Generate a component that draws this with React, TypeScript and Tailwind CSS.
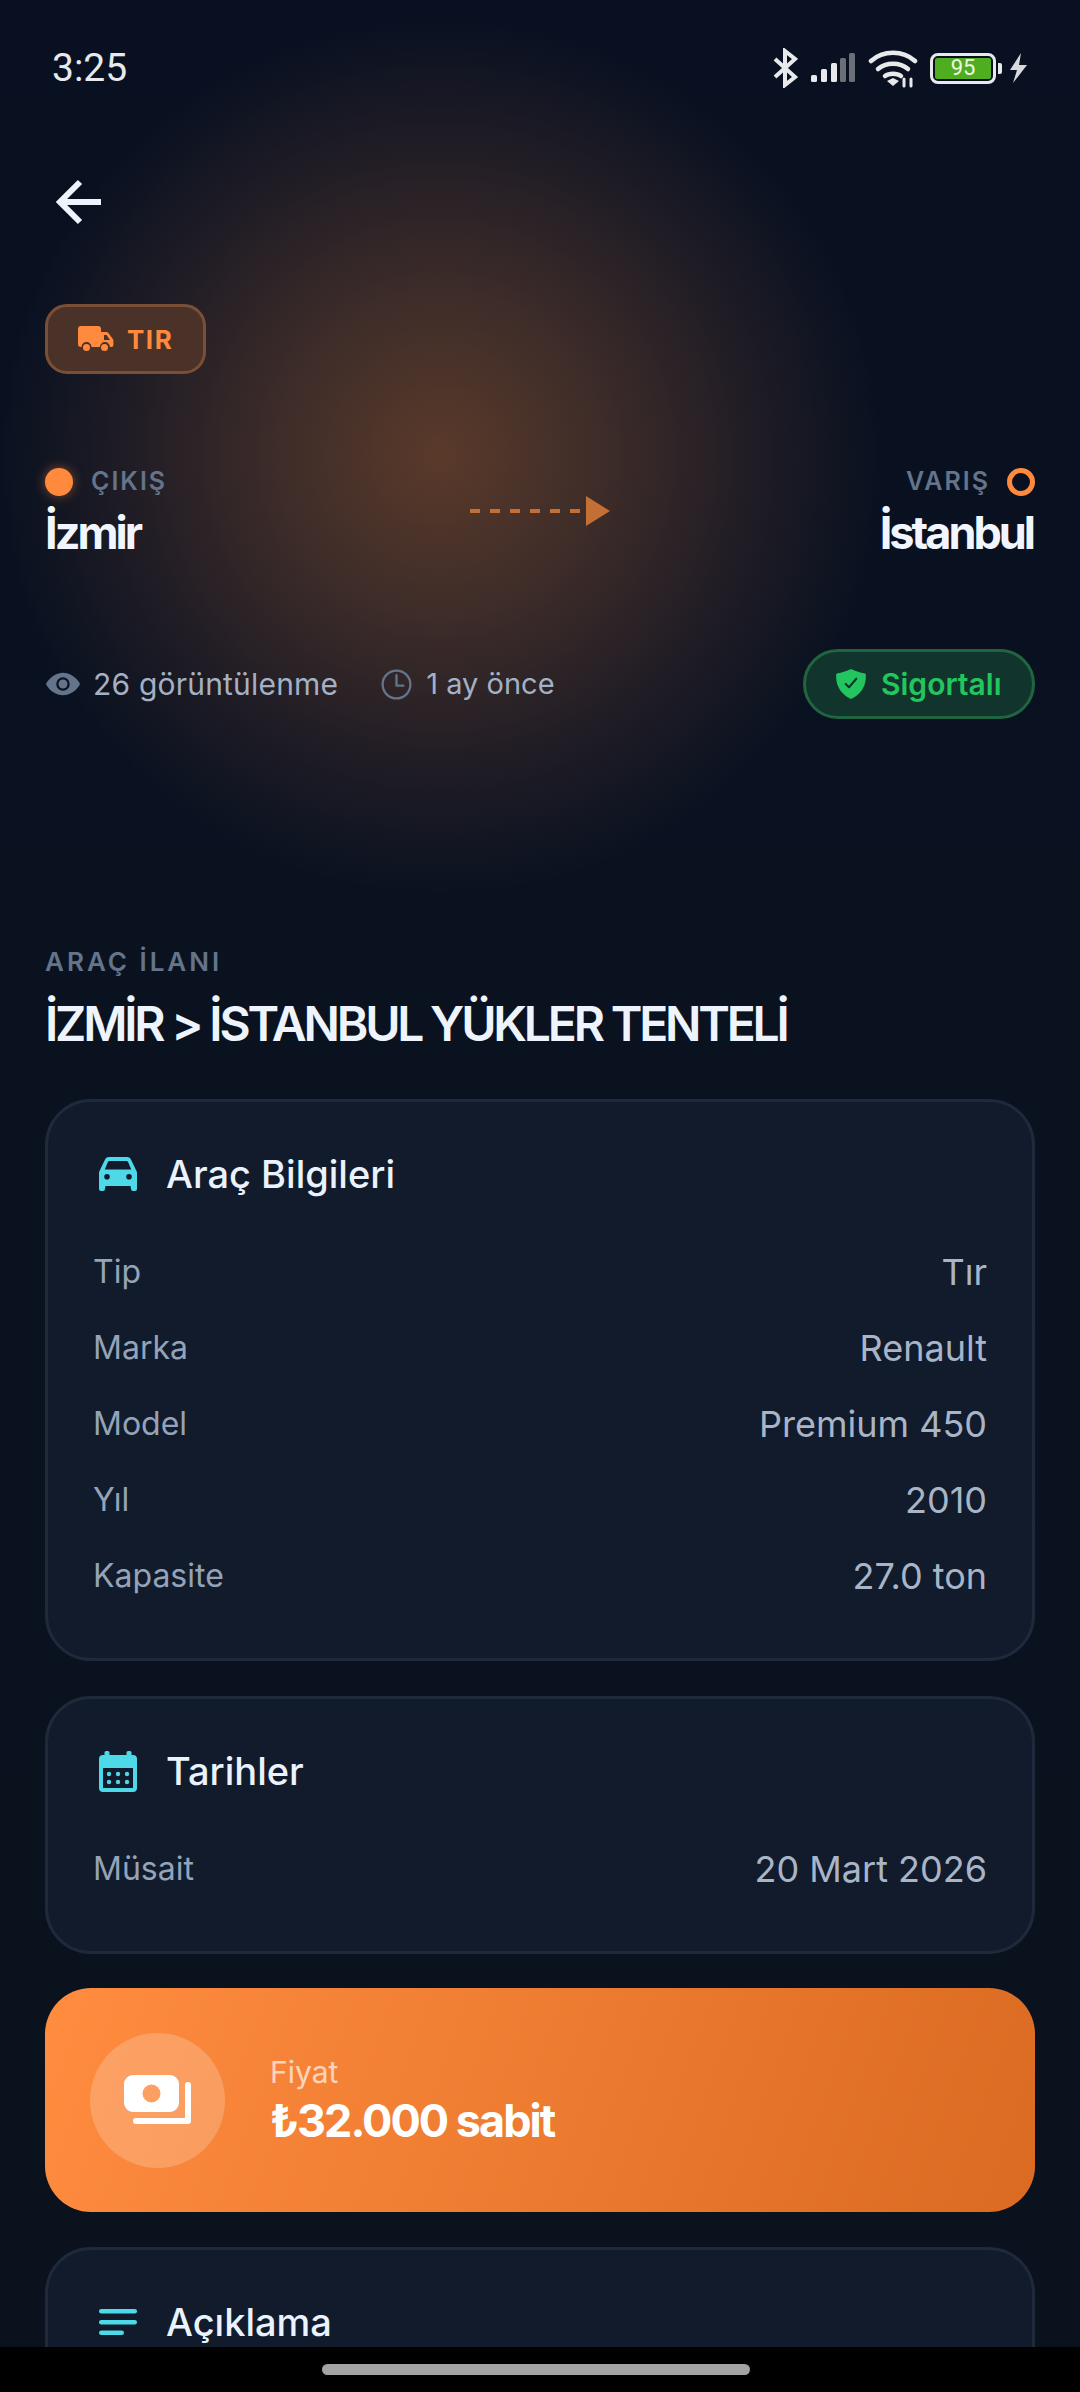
import type { ReactNode } from "react";
import { IoEye, IoShieldCheckmark, IoTimeOutline } from "react-icons/io5";

function StatusIcons() {
  return (
    <div className="flex items-center text-[#e8e9eb]">
      <svg width="26" height="40" viewBox="0 0 26 40" fill="none" stroke="currentColor" strokeWidth="4">
        <path d="M3 11 23 29 13 37V3l10 8L3 29" />
      </svg>
      <svg width="44" height="30" viewBox="0 0 44 30" className="ml-[13px]">
        <rect x="0" y="22" width="6" height="7" rx="1.5" fill="#e8e9eb" />
        <rect x="10" y="16" width="6" height="13" rx="1.5" fill="#e8e9eb" />
        <rect x="20" y="10" width="6" height="19" rx="1.5" fill="#e8e9eb" />
        <rect x="29" y="5" width="6" height="24" rx="1.5" fill="#6b7078" />
        <rect x="38" y="0" width="6" height="29" rx="1.5" fill="#6b7078" />
      </svg>
      <svg width="50" height="40" viewBox="0 0 50 40" className="ml-[13px]" fill="none" stroke="currentColor" strokeWidth="4.5" strokeLinecap="round">
        <path d="M3 13c12-11 32-11 44 0" />
        <path d="M10 21c8-7 22-7 30 0" />
        <path d="M17 28c4-3 12-3 16 0" />
        <path d="M19 33l6-3 6 3-6 5z" fill="currentColor" stroke="none" />
        <path d="M36 38v-7M43 38v-7" strokeWidth="3" />
      </svg>
      <div className="relative ml-[12px] flex h-[31px] w-[66px] items-center rounded-[8px] border-[3px] border-[#e8e9eb] p-[2px]">
        <div className="flex h-full w-full items-center justify-center rounded-[2px] bg-[#4fae1f] font-['Roboto',sans-serif] text-[22px] leading-none text-[#f1f5ea]">
          95
        </div>
      </div>
      <div className="ml-[2px] h-[11px] w-[4px] rounded-r-[2px] bg-[#e8e9eb]" />
      <svg width="20" height="30" viewBox="0 0 20 30" className="ml-[6px]" fill="#d9dadc">
        <path d="M13 0 2 17h7l-4 13L19 12h-8z" />
      </svg>
    </div>
  );
}

function CarIcon() {
  return (
    <svg width="38" height="34" viewBox="0 0 38 34" fill="#4dd9e8">
      <path
        fillRule="evenodd"
        d="M10 0h18c2 0 3.500 1 4.200 3L37 13c.7 1 1 2 1 3v16a2 2 0 0 1-2 2h-2a2 2 0 0 1-2-2l-.500-3H6.500L6 32a2 2 0 0 1-2 2H2a2 2 0 0 1-2-2V16c0-1 .3-2 1-3L5.800 3C6.500 1 8 0 10 0zm.500 4c-.8 0-1.300.4-1.600 1L5.800 12.500h26.400L29.100 5c-.3-.6-.8-1-1.600-1zM8 17a2.800 2.800 0 1 0 0 5.600A2.800 2.800 0 0 0 8 17zm22 0a2.800 2.800 0 1 0 0 5.600 2.800 2.800 0 0 0 0-5.600z"
      />
    </svg>
  );
}

function CalendarIcon() {
  return (
    <svg width="38" height="41" viewBox="0 0 38 41" fill="#4dd9e8">
      <path
        fillRule="evenodd"
        d="M7 0h2a1.500 1.500 0 0 1 1.500 1.500V4h17V1.500A1.500 1.500 0 0 1 29 0h2a1.500 1.500 0 0 1 1.500 1.500V4H34a4 4 0 0 1 4 4v29a4 4 0 0 1-4 4H4a4 4 0 0 1-4-4V8a4 4 0 0 1 4-4h1.500V1.500A1.500 1.500 0 0 1 7 0zM4 17v20h30V17z"
      />
      <circle cx="10" cy="23" r="2.200" />
      <circle cx="19" cy="23" r="2.200" />
      <circle cx="28" cy="23" r="2.200" />
      <circle cx="10" cy="31" r="2.200" />
      <circle cx="19" cy="31" r="2.200" />
      <circle cx="28" cy="31" r="2.200" />
    </svg>
  );
}

function Card({ icon, title, children, className }: { icon: ReactNode; title: string; children?: ReactNode; className?: string }) {
  return (
    <section className={`rounded-[46px] border-[3px] border-[#1e2a3b] bg-[#111b2b] px-[45px] pt-[45px] pb-[44px] ${className ?? ""}`}>
      <div className="flex h-[54px] items-center">
        <div className="flex w-[73px] justify-start pl-[6px] text-[#4dd9e8]">{icon}</div>
        <h2 className="text-[38px] leading-none font-medium text-[#eaf2fd]">{title}</h2>
      </div>
      {children}
    </section>
  );
}

function Row({ label, value }: { label: string; value: string }) {
  return (
    <div className="flex h-[76px] items-center justify-between">
      <span className="text-[32px] text-[#94a3b8]">{label}</span>
      <span className="text-[36px] text-[#a9b5c7]">{value}</span>
    </div>
  );
}

export default function App() {
  return (
    <div className="relative flex h-[2392px] w-[1080px] flex-col overflow-hidden bg-[radial-gradient(circle_440px_at_440px_455px,#5a3a2a_0%,#3f2d29_35%,#1f1c25_72%,transparent_100%),linear-gradient(180deg,#081021_0px,#0a1220_900px,#0b121e_100%)] font-['Inter',sans-serif]">
      <div className="flex h-[136px] shrink-0 items-center justify-between pr-[52px] pl-[52px]">
        <span className="font-['Roboto',sans-serif] text-[39px] text-[#e8e9eb]">3:25</span>
        <StatusIcons />
      </div>

      <div className="flex h-[132px] shrink-0 items-center pl-[55px]">
        <svg width="48" height="48" viewBox="0 0 48 48" fill="none" stroke="#eef4fe" strokeWidth="6" strokeLinecap="butt">
          <path d="M46 24H5M25 4 5 24l20 20" />
        </svg>
      </div>

      <div className="mt-[36px] px-[45px]">
        <div className="flex h-[70px] w-[161px] items-center gap-[13px] rounded-[22px] border-[3px] border-[#7b4f35] bg-[#4a3229] pl-[30px]">
          <svg width="36" height="26" viewBox="0 0 36 26" fill="#ff8a3d">
            <path d="M3 0h17a3 3 0 0 1 3 3v3h5c1 0 2 .5 2.600 1.300l4.400 6c.3.4.4.9.4 1.400V19a2 2 0 0 1-2 2h-1.500a5 5 0 0 0-10 0H13.500a5 5 0 0 0-10 0H3a3 3 0 0 1-3-3V3a3 3 0 0 1 3-3zm23 9v5h6l-3.500-5z" />
            <circle cx="8.500" cy="21.500" r="3.500" />
            <circle cx="26.500" cy="21.500" r="3.500" />
          </svg>
          <span className="text-[26px] font-bold tracking-[1.500px] text-[#ff8a3d]">TIR</span>
        </div>
      </div>

      <div className="mt-[93px] grid grid-cols-[1fr_auto_1fr] items-center px-[45px]">
        <div>
          <div className="flex h-[30px] items-center gap-[18px]">
            <span className="h-[28px] w-[28px] rounded-full bg-[#ff8a3d] shadow-[0_0_12px_rgba(255,138,61,0.45)]" />
            <span className="text-[25px] font-semibold tracking-[2px] text-[#64748b]">ÇIKIŞ</span>
          </div>
          <div className="mt-[8px] text-[45px] leading-[56px] font-bold tracking-[-3px] text-[#f1f6fe]">İzmir</div>
        </div>
        <div className="mb-[6px] flex items-center">
          <div className="h-[4px] w-[116px] bg-[repeating-linear-gradient(90deg,#c46f35_0px,#c46f35_10px,transparent_10px,transparent_20px)]" />
          <svg width="24" height="30" viewBox="0 0 24 30" fill="#c46f35">
            <path d="M0 0 24 15 0 30z" />
          </svg>
        </div>
        <div className="flex flex-col items-end">
          <div className="flex h-[30px] items-center gap-[17px]">
            <span className="text-[25px] font-semibold tracking-[2px] text-[#64748b]">VARIŞ</span>
            <span className="h-[28px] w-[28px] rounded-full border-[5px] border-[#ff8a3d]" />
          </div>
          <div className="mt-[8px] pr-[2px] text-[45px] leading-[56px] font-bold tracking-[-3px] text-[#f1f6fe]">İstanbul</div>
        </div>
      </div>

      <div className="mt-[88px] flex items-center justify-between px-[45px]">
        <div className="flex items-center">
          <IoEye className="text-[36px] text-[#64748b]" />
          <span className="ml-[12px] text-[30px] tracking-[0.2px] text-[#a4b1c4]">26 görüntülenme</span>
          <IoTimeOutline className="ml-[40px] text-[37px] text-[#64748b]" />
          <span className="ml-[11px] text-[29px] text-[#a4b1c4]">1 ay önce</span>
        </div>
        <div className="flex h-[70px] w-[232px] items-center gap-[13px] rounded-full border-[3px] border-[#1f6640] bg-[#11352d] pl-[28px]">
          <IoShieldCheckmark className="text-[34px] text-[#22c55e]" />
          <span className="text-[30px] font-semibold text-[#22c55e]">Sigortalı</span>
        </div>
      </div>

      <div className="mt-[226px] px-[45px]">
        <div className="text-[26px] leading-[34px] font-semibold tracking-[3px] text-[#64748b]">ARAÇ İLANI</div>
        <h1 className="mt-[14px] text-[48px] leading-[62px] font-semibold tracking-[-3.200px] text-[#eef4fe]">
          İZMİR &gt; İSTANBUL YÜKLER TENTELİ
        </h1>
      </div>

      <div className="mt-[44px] flex flex-col gap-[35px] px-[45px]">
        <Card icon={<CarIcon />} title="Araç Bilgileri">
          <div className="mt-[33px]">
            <Row label="Tip" value="Tır" />
            <Row label="Marka" value="Renault" />
            <Row label="Model" value="Premium 450" />
            <Row label="Yıl" value="2010" />
            <Row label="Kapasite" value="27.0 ton" />
          </div>
        </Card>
        <Card icon={<CalendarIcon />} title="Tarihler">
          <div className="mt-[33px]">
            <Row label="Müsait" value="20 Mart 2026" />
          </div>
        </Card>
        <div className="-mt-[1px] flex h-[224px] items-center rounded-[46px] bg-[linear-gradient(110deg,#ff8c3f_0%,#db6a22_100%)] pl-[45px]">
          <div className="flex h-[135px] w-[135px] items-center justify-center rounded-full bg-white/20">
            <svg width="68" height="50" viewBox="0 0 68 50" fill="#fff">
              <path fillRule="evenodd" d="M9 0h37a9 9 0 0 1 9 9v19a9 9 0 0 1-9 9H9a9 9 0 0 1-9-9V9a9 9 0 0 1 9-9zm18.500 9.500a9 9 0 1 0 0 18 9 9 0 0 0 0-18z" />
              <path d="M61 10a3 3 0 0 1 6 0v36a3 3 0 0 1-3 3H12a3 3 0 0 1 0-6h49z" />
            </svg>
          </div>
          <div className="ml-[45px]">
            <div className="text-[30px] leading-[36px] text-white/65">Fiyat</div>
            <div className="mt-[6px] text-[45px] leading-[50px] font-bold tracking-[-2px] text-white">₺32.000 sabit</div>
          </div>
        </div>
        <Card
          className="h-[320px] shrink-0"
          icon={
            <svg width="38" height="26" viewBox="0 0 38 26" fill="#4dd9e8">
              <rect x="0" y="0" width="38" height="4.500" rx="2.250" />
              <rect x="0" y="11" width="38" height="4.500" rx="2.250" />
              <rect x="0" y="21.500" width="25" height="4.500" rx="2.250" />
            </svg>
          }
          title="Açıklama"
        />
      </div>

      <div className="absolute right-0 bottom-0 left-0 flex h-[45px] items-start justify-center bg-black pt-[17px]">
        <div className="ml-[-8px] h-[11px] w-[428px] rounded-full bg-[#a3a3a3]" />
      </div>
    </div>
  );
}
